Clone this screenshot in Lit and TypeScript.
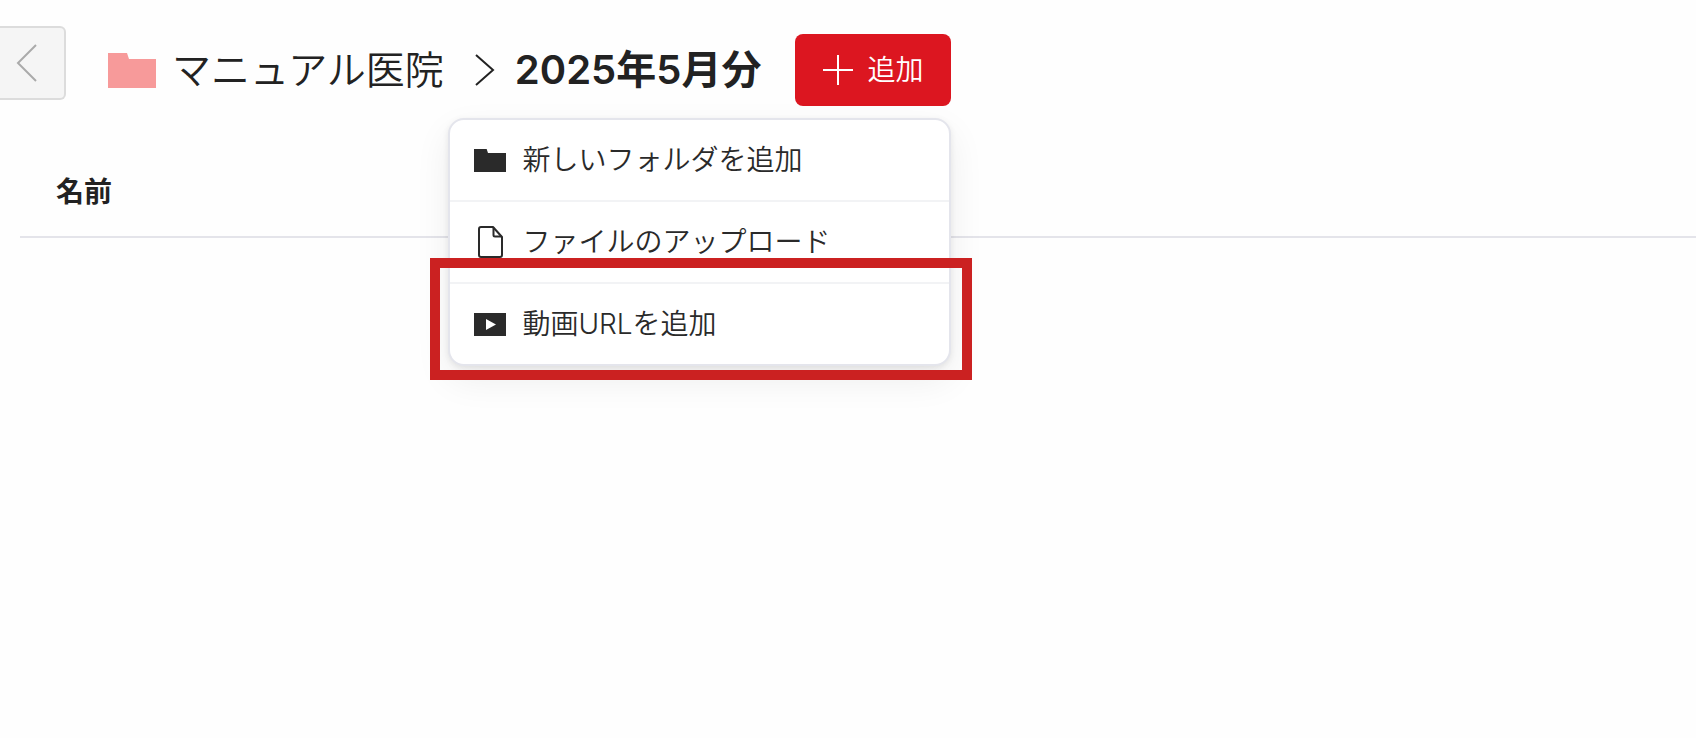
import { LitElement, html, css, svg } from "lit";
import { customElement, state } from "lit/decorators.js";

const folderPath = svg`<path d="M0 0H19L21 6H48V35H0Z" fill="currentColor" />`;

const folderIcon = html`<svg class="item-icon" viewBox="0 0 48 35" width="32" height="23" preserveAspectRatio="none" aria-hidden="true">${folderPath}</svg>`;

const fileIcon = html`<svg class="item-icon" viewBox="0 0 32 32" width="32" height="32" fill="none" stroke="currentColor" stroke-width="2" stroke-linejoin="round" aria-hidden="true">
  <path d="M7 1H19L28 11V29Q28 31 26 31H7Q5 31 5 29V3Q5 1 7 1Z" />
  <path d="M19.500 1.500V9Q19.500 10.500 21 10.500H27.500" />
</svg>`;

const videoIcon = html`<svg class="item-icon" viewBox="0 0 32 23" width="32" height="23" aria-hidden="true">
  <path d="M0 0H32V23H0Z" fill="currentColor" />
  <path d="M12 6V17L22 11.500Z" fill="#fff" />
</svg>`;

@customElement("app-root")
export class AppRoot extends LitElement {
  @state() private open = true;

  private items = [
    { icon: folderIcon, label: "新しいフォルダを追加", marked: false },
    { icon: fileIcon, label: "ファイルのアップロード", marked: false },
    { icon: videoIcon, label: "動画URLを追加", marked: true },
  ];

  static styles = css`
    :host {
      display: block;
      min-height: 100vh;
      background: #fefefe;
      color: #222;
      font-family: Inter, "Noto Sans CJK JP", sans-serif;
      font-size: 28px;
      line-height: 40px;
    }
    button {
      font: inherit;
      cursor: pointer;
    }
    .toolbar {
      display: flex;
      align-items: flex-start;
      padding-top: 26px;
    }
    .back {
      display: flex;
      align-items: center;
      box-sizing: border-box;
      width: 66px;
      height: 74px;
      padding: 0 0 0 16px;
      border: 2px solid #dcdcdc;
      border-left: 0;
      border-radius: 0 6px 6px 0;
      background: #f5f5f5;
      color: #aaa;
    }
    .crumbs {
      display: flex;
      align-items: center;
      height: 72px;
      margin: 8px 34px 0 42px;
      font-size: 39px;
      line-height: 56px;
      white-space: nowrap;
    }
    .crumb-folder {
      color: #f79a9a;
      margin-right: 16px;
    }
    .crumb-link {
      color: inherit;
      font-weight: 350;
      text-decoration: none;
    }
    .crumb-sep {
      margin: 0 20px 0 31px;
    }
    .crumb-current {
      margin: 0;
      font-size: 40px;
      line-height: 56px;
      font-weight: 600;
    }
    .add-wrap {
      position: relative;
      margin-top: 8px;
    }
    .add {
      display: flex;
      align-items: center;
      gap: 14px;
      height: 72px;
      padding: 0 28px;
      border: 0;
      border-radius: 8px;
      background: #dc1620;
      color: #fff;
      font-weight: 350;
      white-space: nowrap;
    }
    .menu {
      position: absolute;
      z-index: 1;
      top: 84px;
      right: 0;
      box-sizing: border-box;
      width: 503px;
      margin: 0;
      padding: 0;
      list-style: none;
      border: 2px solid #e4e5ec;
      border-radius: 16px;
      background: #fff;
      box-shadow: 0 2px 6px rgba(0, 0, 0, 0.08), 0 14px 36px rgba(0, 0, 0, 0.07);
    }
    .entry {
      position: relative;
    }
    .entry + .entry {
      border-top: 2px solid #f2f3f5;
    }
    .item {
      display: flex;
      align-items: center;
      gap: 16px;
      width: 100%;
      height: 80px;
      padding: 0 24px;
      border: 0;
      background: none;
      color: #2a2a2a;
      text-align: left;
      white-space: nowrap;
    }
    .item-icon {
      flex: none;
    }
    .item-label {
      font-weight: 350;
    }
    .marked::after {
      content: "";
      position: absolute;
      inset: -26px -23px -16px -20px;
      border: 10px solid #cb2121;
      pointer-events: none;
    }
    .listing {
      padding-left: 20px;
      margin-top: 66px;
    }
    .files {
      width: 100%;
      border-collapse: collapse;
    }
    .files th {
      padding: 0 36px 24px;
      border-bottom: 2px solid #e4e4ea;
      text-align: left;
      font-weight: 600;
    }
  `;

  render() {
    return html`
      <header class="toolbar">
        <button class="back" aria-label="戻る">
          <svg width="22" height="38" viewBox="0 0 22 38" fill="none" stroke="currentColor" stroke-width="2" aria-hidden="true">
            <path d="M20 1L2 19L20 37" />
          </svg>
        </button>
        <nav class="crumbs">
          <svg class="crumb-folder" width="48" height="35" viewBox="0 0 48 35" aria-hidden="true">${folderPath}</svg>
          <a class="crumb-link" href="#">マニュアル医院</a>
          <svg class="crumb-sep" width="20" height="32" viewBox="0 0 20 32" fill="none" stroke="currentColor" stroke-width="2" aria-hidden="true">
            <path d="M1 1L18 16L1 31" />
          </svg>
          <h1 class="crumb-current">2025年5月分</h1>
        </nav>
        <div class="add-wrap">
          <button class="add" aria-expanded=${this.open} @click=${() => (this.open = !this.open)}>
            <svg width="30" height="30" viewBox="0 0 30 30" stroke="currentColor" stroke-width="2" aria-hidden="true">
              <path d="M15 0V30M0 15H30" />
            </svg>
            追加
          </button>
          ${this.open
            ? html`<ul class="menu">
                ${this.items.map(
                  (item) => html`<li class="entry ${item.marked ? "marked" : ""}">
                    <button class="item">${item.icon}<span class="item-label">${item.label}</span></button>
                  </li>`
                )}
              </ul>`
            : null}
        </div>
      </header>
      <main class="listing">
        <table class="files">
          <thead>
            <tr><th scope="col">名前</th></tr>
          </thead>
        </table>
      </main>
    `;
  }
}
